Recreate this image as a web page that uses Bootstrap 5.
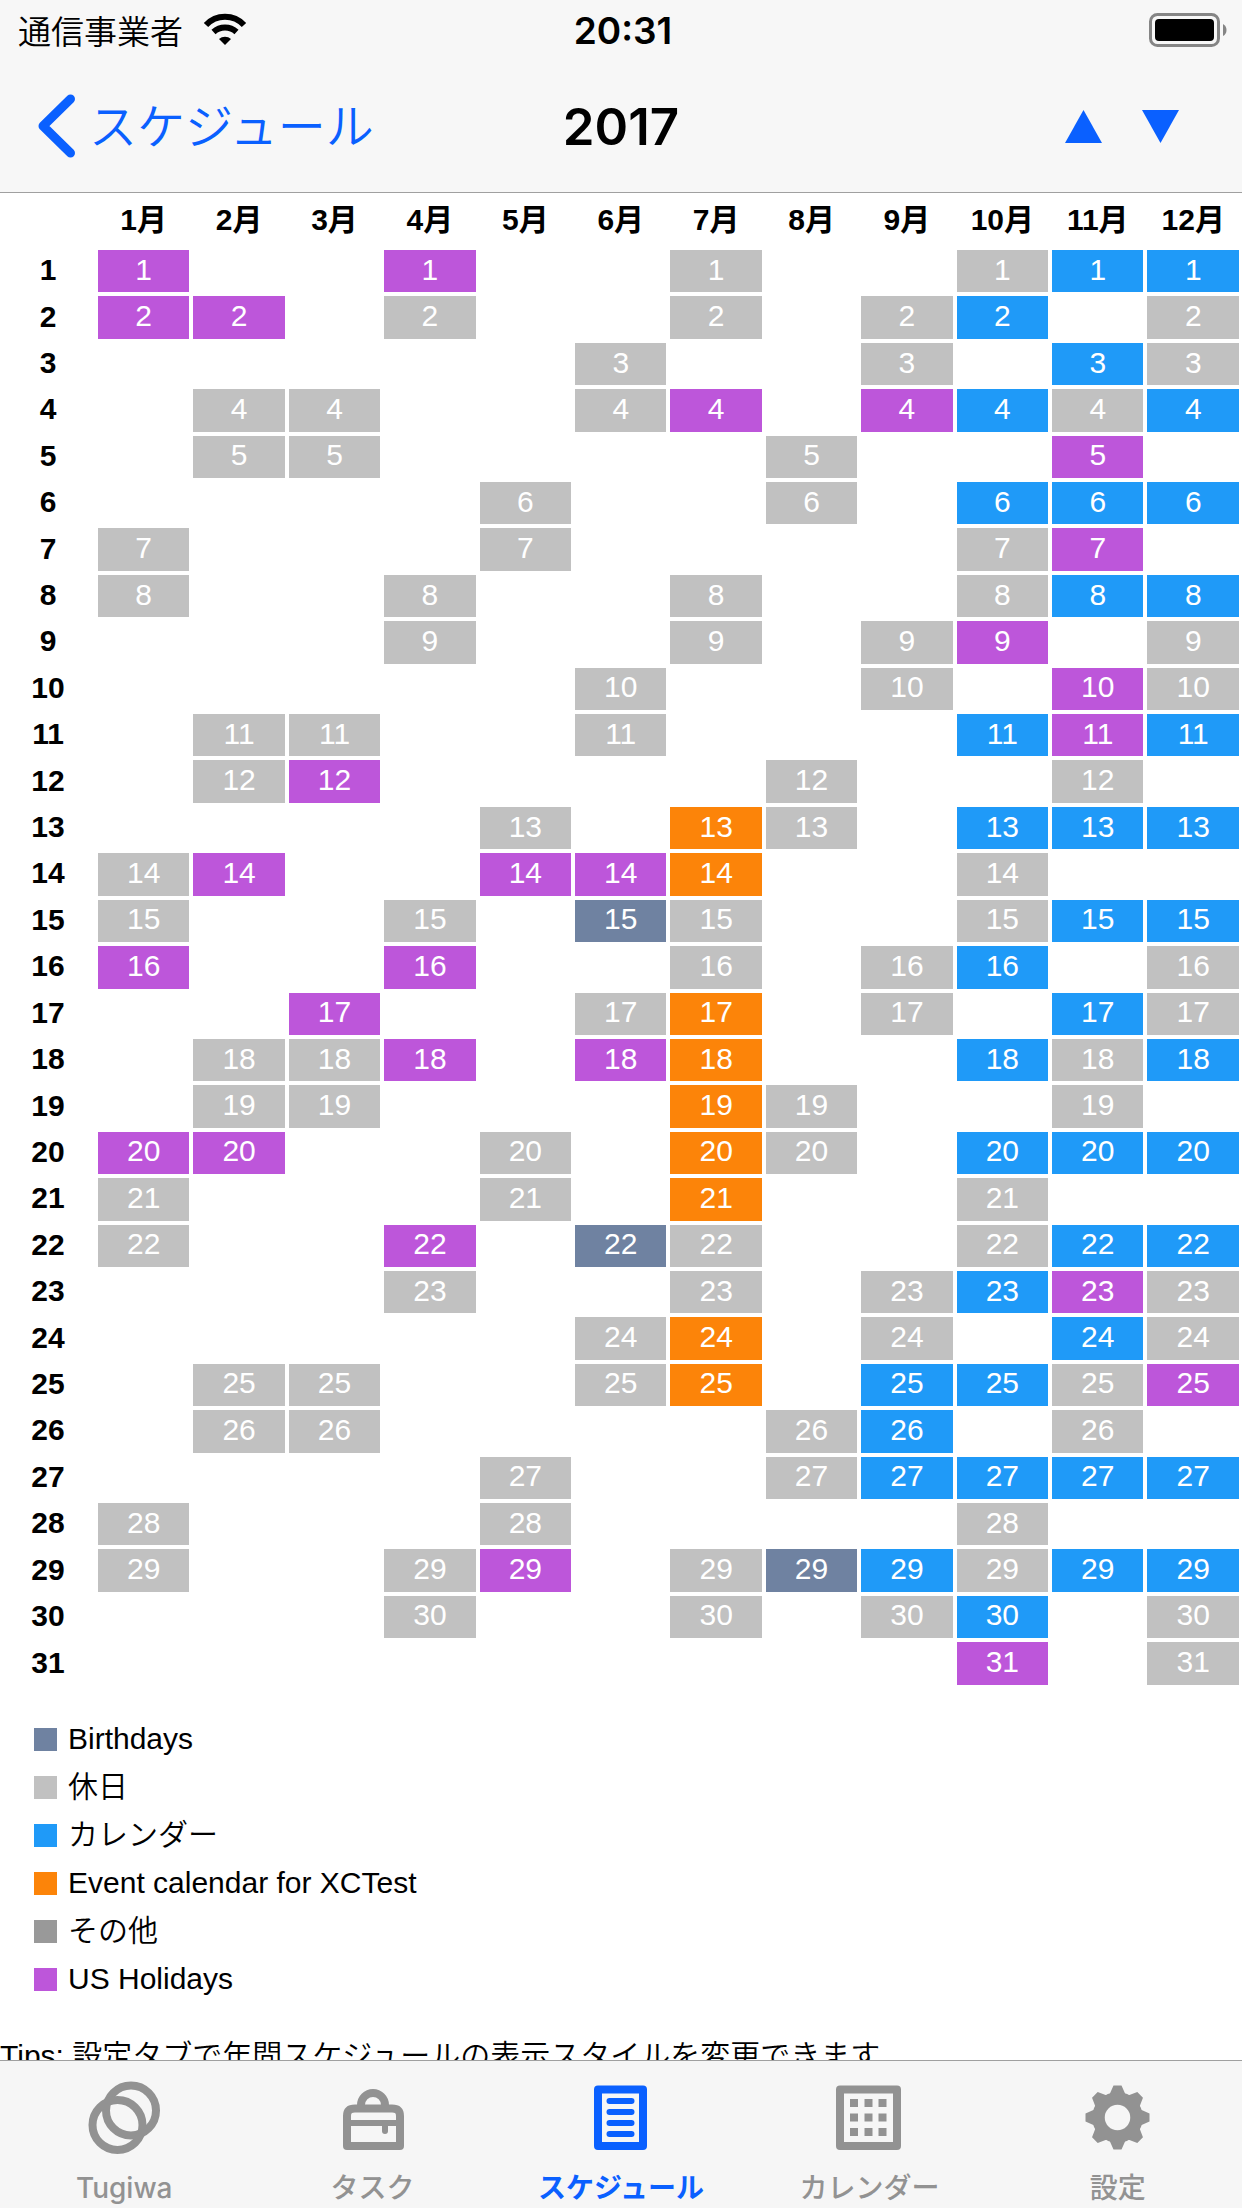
<!DOCTYPE html>
<html lang="ja">
<head>
<meta charset="utf-8">
<meta name="viewport" content="width=device-width, initial-scale=1">
<title>2017</title>
<link href="https://cdn.jsdelivr.net/npm/bootstrap@5.3.0/dist/css/bootstrap.min.css" rel="stylesheet">
<style>
  :root {
    --tint: #0a60ff;
    --bar: #f7f7f7;
    --hairline: #a0a0a0;
    --idle: #929292;
  }
  body { font-family: "Liberation Sans", "Noto Sans CJK JP", sans-serif; font-size: 30px; line-height: 48px; color: #000; background: #fff; }
  .top-area { background: var(--bar); border-bottom: 1px solid var(--hairline); }
  .status-row { height: 60px; padding: 0 14px 0 18px; font-size: 33px; }
  .side { flex: 1 1 0; }
  .carrier { font-family: "Noto Sans CJK JP", sans-serif; font-weight: 350; }
  .clock { font-family: Inter, sans-serif; font-size: 37px; font-weight: 600; padding-top: 2px; }
  .title-row { height: 132px; padding: 0 36px; }
  .back-link { color: var(--tint); font-family: "Noto Sans CJK JP", sans-serif; font-weight: 350; font-size: 48px; line-height: 64px; gap: 11px; }
  .back-link span { padding-bottom: 6px; }
  .year-title { font-family: Inter, sans-serif; font-size: 51px; font-weight: 600; line-height: 64px; padding-top: 2px; }
  .step-btn { color: var(--tint); padding: 0; border: 0; background: none; line-height: 1; }
  .steps { gap: 40px; }
  .steps .step-btn:last-child { margin-right: 27px; }

  .schedule { padding-right: 1px; }
  .year-table { width: 100%; height: 1494px; table-layout: fixed; border-collapse: separate; border-spacing: 0; text-align: center; line-height: 36px; }
  .day-col { width: 96px; }
  .year-table thead th { height: 55px; padding: 0 0 2px; }
  .year-table tbody tr { height: 46px; }
  .year-table tbody th { padding: 0 0 2px; }
  .year-table tbody td { padding: 0 0 3px; border: 2px solid #fff; background-clip: padding-box; color: #fff; }
  .k-birthday { background-color: #6f82a1; }
  .k-rest { background-color: #c1c1c1; }
  .k-calendar { background-color: #1f9af8; }
  .k-event { background-color: #fc8409; }
  .k-other { background-color: #999; }
  .k-holiday { background-color: #bd56da; }

  .legend { margin: 28px 0 0; padding-left: 34px; }
  .legend li { gap: 11px; height: 48px; }
  .legend, .tips { font-weight: 350; }
  .swatch { width: 23px; height: 23px; }
  .tips { margin-top: 29px; white-space: nowrap; }

  .tab-bar { background: #f6f6f6; border-top: 1px solid var(--hairline); height: 148px; }
  .tab-link { color: var(--idle); font-family: Inter, "Noto Sans CJK JP", sans-serif; font-size: 28px; font-weight: 500; line-height: 40px; padding-top: 16px; gap: 11px; }
  .tab-link.current { color: var(--tint); font-weight: 700; }
</style>
</head>
<body>
<div class="d-flex flex-column vh-100 overflow-hidden">
  <header class="top-area flex-shrink-0">
    <div class="status-row d-flex align-items-center">
      <div class="side d-flex align-items-center">
        <span class="carrier">通信事業者</span>
        <svg class="ms-3" width="48" height="34" viewBox="-2 0 48 34" aria-hidden="true">
          <path d="M5 12A26 26 0 0 1 43 12M12.500 19A17 17 0 0 1 35.500 19" fill="none" stroke="#000" stroke-width="6"/>
          <path d="M24 32L18 26A9 9 0 0 1 30 26Z" fill="#000"/>
        </svg>
      </div>
      <div class="clock">20:31</div>
      <div class="side d-flex justify-content-end">
        <svg width="80" height="36" viewBox="0 0 80 36" aria-label="Battery">
          <rect x="2.500" y="2.500" width="68" height="31" rx="7" fill="none" stroke="#858585" stroke-width="3"/>
          <rect x="7" y="7" width="59" height="22" rx="4" fill="#000"/>
          <path d="M75 12Q78.500 14 78.500 18T75 24Z" fill="#858585"/>
        </svg>
      </div>
    </div>
    <div class="title-row d-flex align-items-center">
      <div class="side d-flex">
        <a href="#" class="back-link d-flex align-items-center text-decoration-none text-nowrap">
          <svg width="42" height="66" viewBox="0 0 42 66" aria-hidden="true"><path d="M34.500 6L7 33L34.500 60" fill="none" stroke="currentColor" stroke-width="9" stroke-linecap="round" stroke-linejoin="round"/></svg>
          <span>スケジュール</span>
        </a>
      </div>
      <h1 class="year-title m-0">2017</h1>
      <div class="side steps d-flex justify-content-end">
        <button type="button" class="step-btn" aria-label="前の年"><svg class="d-block" width="37" height="33" viewBox="0 0 37 33"><path d="M18.500 0L37 33H0Z" fill="currentColor"/></svg></button>
        <button type="button" class="step-btn" aria-label="次の年"><svg class="d-block" width="37" height="33" viewBox="0 0 37 33"><path d="M0 0H37L18.500 33Z" fill="currentColor"/></svg></button>
      </div>
    </div>
  </header>

  <main class="schedule flex-fill overflow-hidden">
    <table class="year-table">
      <colgroup><col class="day-col p-0"><col span="12" class="p-0"></colgroup>
      <thead>
        <tr>
          <td></td>
          <th scope="col">1月</th><th scope="col">2月</th><th scope="col">3月</th><th scope="col">4月</th>
          <th scope="col">5月</th><th scope="col">6月</th><th scope="col">7月</th><th scope="col">8月</th>
          <th scope="col">9月</th><th scope="col">10月</th><th scope="col">11月</th><th scope="col">12月</th>
        </tr>
      </thead>
      <tbody id="days"></tbody>
    </table>
    <ul class="legend list-unstyled">
      <li class="d-flex align-items-center"><span class="swatch k-birthday"></span>Birthdays</li>
      <li class="d-flex align-items-center"><span class="swatch k-rest"></span>休日</li>
      <li class="d-flex align-items-center"><span class="swatch k-calendar"></span>カレンダー</li>
      <li class="d-flex align-items-center"><span class="swatch k-event"></span>Event calendar for XCTest</li>
      <li class="d-flex align-items-center"><span class="swatch k-other"></span>その他</li>
      <li class="d-flex align-items-center"><span class="swatch k-holiday"></span>US Holidays</li>
    </ul>
    <p class="tips mb-0">Tips: 設定タブで年間スケジュールの表示スタイルを変更できます</p>
  </main>

  <nav class="tab-bar d-flex flex-shrink-0">
    <a href="#" class="tab-link d-flex flex-column align-items-center text-decoration-none col">
      <svg width="76" height="80" viewBox="0 0 76 80" fill="none" stroke="currentColor" stroke-width="8" aria-hidden="true">
        <circle cx="45" cy="33.500" r="25"/><circle cx="31.500" cy="48" r="25"/>
      </svg>
      <span>Tugiwa</span>
    </a>
    <a href="#" class="tab-link d-flex flex-column align-items-center text-decoration-none col">
      <svg width="76" height="80" viewBox="0 0 76 80" fill="none" stroke="currentColor" aria-hidden="true">
        <path d="M26 30V28A12 12 0 0 1 50 28V30" stroke-width="8"/>
        <path d="M12 69V39Q12 31.500 20 31.500H57Q65 31.500 65 39V69Z" stroke-width="8" stroke-linejoin="round"/>
        <path d="M10 46H66" stroke-width="6"/><path d="M50 46V54" stroke-width="6" stroke-linecap="round"/>
      </svg>
      <span>タスク</span>
    </a>
    <a href="#" class="tab-link current d-flex flex-column align-items-center text-decoration-none col" aria-current="page">
      <svg width="76" height="80" viewBox="0 0 76 80" fill="none" stroke="currentColor" aria-hidden="true">
        <rect x="15" y="12.500" width="45" height="56.500" stroke-width="8" stroke-linejoin="round"/>
        <path d="M26.500 24H48.500M26.500 35H48.500M26.500 46H48.500M26.500 57H48.500" stroke-width="6" stroke-linecap="round"/>
      </svg>
      <span>スケジュール</span>
    </a>
    <a href="#" class="tab-link d-flex flex-column align-items-center text-decoration-none col">
      <svg width="76" height="80" viewBox="0 0 76 80" fill="none" stroke="currentColor" stroke-width="8" aria-hidden="true">
        <rect x="9" y="12.500" width="57" height="56.500" stroke-linejoin="round"/>
        <path d="M19 26H27M33.500 26H41.500M47.500 26H55.500M19 40.500H27M33.500 40.500H41.500M47.500 40.500H55.500M19 55H27M33.500 55H41.500M47.500 55H55.500"/>
      </svg>
      <span>カレンダー</span>
    </a>
    <a href="#" class="tab-link d-flex flex-column align-items-center text-decoration-none col">
      <svg width="76" height="80" viewBox="-37.500 -40.500 76 80" fill="currentColor" aria-hidden="true">
        <circle r="19" fill="none" stroke="currentColor" stroke-width="12.500"/>
        <g id="tooth"><path d="M-8 -23L-4 -32H4L8 -23ZM-8 23L-4 32H4L8 23Z"/></g>
        <use href="#tooth" transform="rotate(45)"/><use href="#tooth" transform="rotate(90)"/><use href="#tooth" transform="rotate(135)"/>
      </svg>
      <span>設定</span>
    </a>
  </nav>
</div>

<script>
  // One string per day of the month, one letter per month (January first).
  const kinds = { s: "k-birthday", g: "k-rest", b: "k-calendar", o: "k-event", p: "k-holiday" };
  const days = [
    "p..p..g..gbb", "pp.g..g.gb.g", ".....g..g.bg", ".gg..gp.pbgb", ".gg....g..p.",
    "....g..g.bbb", "g...g....gp.", "g..g..g..gbb", "...g..g.gp.g", ".....g..g.pg",
    ".gg..g...bpb", ".gp....g..g.", "....g.og.bbb", "gp..ppo..g..", "g..g.sg..gbb",
    "p..p..g.gb.g", "..p..go.g.bg", ".ggp.po..bgb", ".gg...og..g.", "pp..g.og.bbb",
    "g...g.o..g..", "g..p.sg..gbb", "...g..g.gbpg", ".....go.g.bg", ".gg..go.bbgp",
    ".gg....gb.g.", "....g..gbbbb", "g...g....g..", "g..gp.gsbgbb", "...g..g.gb.g",
    ".........p.g"
  ];
  document.getElementById("days").innerHTML = days.map((row, i) =>
    `<tr><th scope="row">${i + 1}</th>` +
    [...row].map(c => kinds[c] ? `<td class="${kinds[c]}">${i + 1}</td>` : "<td></td>").join("") +
    "</tr>").join("");
</script>
<script src="https://cdn.jsdelivr.net/npm/bootstrap@5.3.0/dist/js/bootstrap.bundle.min.js"></script>
</body>
</html>
